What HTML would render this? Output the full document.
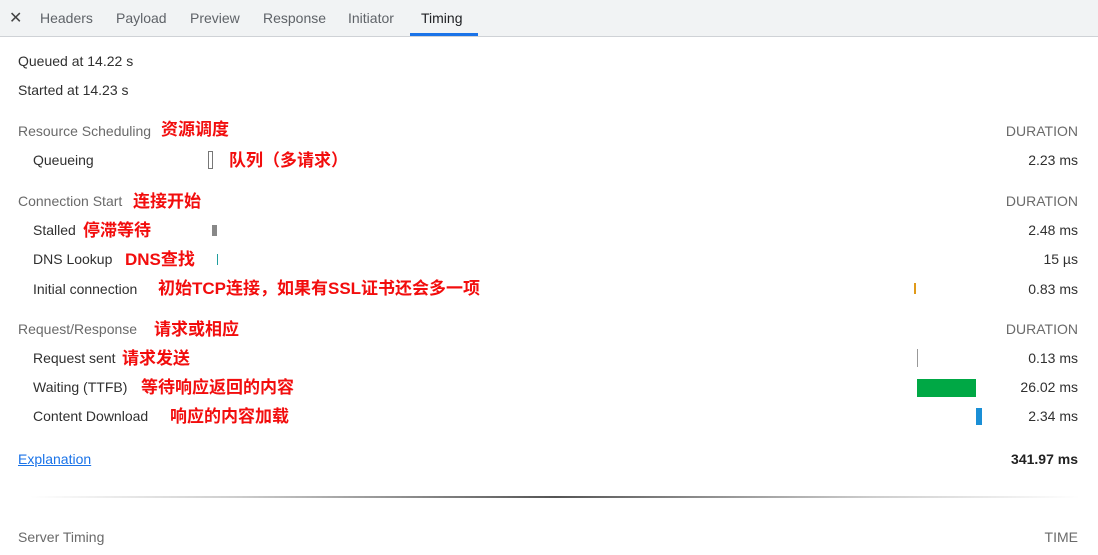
<!DOCTYPE html>
<html><head><meta charset="utf-8"><style>
body{margin:0;width:1098px;height:555px;background:#fff;position:relative;overflow:hidden;font-family:"Liberation Sans","Noto Sans CJK SC",sans-serif;font-size:14px;color:#303030}
.a{position:absolute;white-space:nowrap;line-height:18px}
.tabs{position:absolute;left:0;top:0;width:1098px;height:36px;background:#f1f3f4;border-bottom:1px solid #cfd2d6}
.tab{position:absolute;top:10px;color:#5f6368;font-size:14px}
.h{color:#6a6a6a}
.r{font-weight:bold;color:#f20d0d;font-size:17px;font-family:"Liberation Sans","Noto Sans CJK SC",sans-serif;line-height:20px;margin-top:1px}
.d{right:20px;text-align:right}
.b{position:absolute}
</style></head><body>
<div class="tabs">
<div class="tab" style="left:9px;color:#444;font-size:16px;top:8px">✕</div>
<div class="tab" style="left:40px">Headers</div>
<div class="tab" style="left:116px">Payload</div>
<div class="tab" style="left:190px">Preview</div>
<div class="tab" style="left:263px">Response</div>
<div class="tab" style="left:348px">Initiator</div>
<div class="tab" style="left:421px;color:#202124">Timing</div>
<div class="b" style="left:410px;top:33px;width:68px;height:3px;background:#1a73e8"></div>
</div>
<div class="a" style="left:18px;top:52px">Queued at 14.22 s</div>
<div class="a" style="left:18px;top:81px">Started at 14.23 s</div>

<div class="a h" style="left:18px;top:122px">Resource Scheduling</div>
<div class="a r" style="left:161px;top:119px">资源调度</div>
<div class="a h d" style="top:122px">DURATION</div>
<div class="a" style="left:33px;top:151px">Queueing</div>
<div class="b" style="left:208px;top:151px;width:3px;height:16px;border:1px solid #777"></div>
<div class="a r" style="left:229px;top:150px">队列（多请求）</div>
<div class="a d" style="top:151px">2.23 ms</div>

<div class="a h" style="left:18px;top:192px">Connection Start</div>
<div class="a r" style="left:133px;top:191px">连接开始</div>
<div class="a h d" style="top:192px">DURATION</div>
<div class="a" style="left:33px;top:221px">Stalled</div>
<div class="a r" style="left:83px;top:220px">停滞等待</div>
<div class="b" style="left:212px;top:225px;width:5px;height:11px;background:#888"></div>
<div class="a d" style="top:221px">2.48 ms</div>
<div class="a" style="left:33px;top:250px">DNS Lookup</div>
<div class="a r" style="left:125px;top:249px">DNS查找</div>
<div class="b" style="left:217px;top:254px;width:1px;height:11px;background:#1f9e9e"></div>
<div class="a d" style="top:250px">15 µs</div>
<div class="a" style="left:33px;top:280px">Initial connection</div>
<div class="a r" style="left:158px;top:278px">初始TCP连接，如果有SSL证书还会多一项</div>
<div class="b" style="left:914px;top:283px;width:2px;height:11px;background:#e09a1a"></div>
<div class="a d" style="top:280px">0.83 ms</div>

<div class="a h" style="left:18px;top:320px">Request/Response</div>
<div class="a r" style="left:154px;top:319px">请求或相应</div>
<div class="a h d" style="top:320px">DURATION</div>
<div class="a" style="left:33px;top:349px">Request sent</div>
<div class="a r" style="left:122px;top:348px">请求发送</div>
<div class="b" style="left:917px;top:349px;width:1px;height:18px;background:#999"></div>
<div class="a d" style="top:349px">0.13 ms</div>
<div class="a" style="left:33px;top:378px">Waiting (TTFB)</div>
<div class="a r" style="left:141px;top:377px">等待响应返回的内容</div>
<div class="b" style="left:917px;top:379px;width:59px;height:18px;background:#00a845"></div>
<div class="a d" style="top:378px">26.02 ms</div>
<div class="a" style="left:33px;top:407px">Content Download</div>
<div class="a r" style="left:170px;top:406px">响应的内容加载</div>
<div class="b" style="left:976px;top:408px;width:6px;height:17px;background:#1a8fd6"></div>
<div class="a d" style="top:407px">2.34 ms</div>

<div class="a" style="left:18px;top:450px;color:#1a73e8;text-decoration:underline">Explanation</div>
<div class="a d" style="top:450px;font-weight:bold;color:#222">341.97 ms</div>
<div class="b" style="left:30px;top:496px;width:1050px;height:2px;background:linear-gradient(90deg,#fff,#ccc 20%,#555 50%,#ccc 80%,#fff)"></div>
<div class="a h" style="left:18px;top:528px">Server Timing</div>
<div class="a h d" style="top:528px">TIME</div>
</body></html>
